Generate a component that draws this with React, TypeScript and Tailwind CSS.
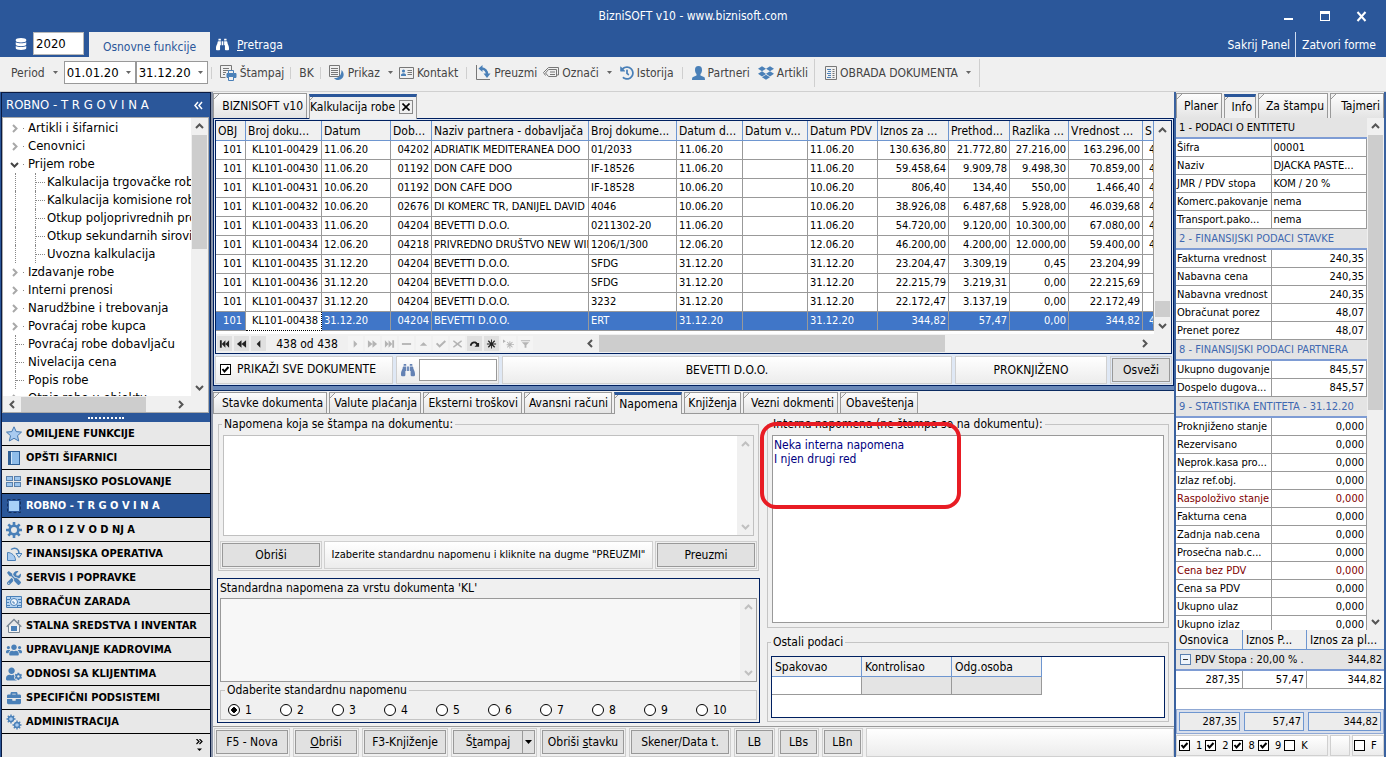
import type { ReactNode } from "react";
import clsx from "clsx";
import {
  FaBinoculars,
  FaBriefcase,
  FaDatabase,
  FaDropbox,
  FaHistory,
  FaTools,
  FaUserCog,
  FaUsers,
} from "react-icons/fa";

const documentColumns = [
  { label: "OBJ", width: "w-[30px]", align: "text-right pr-[3px]" },
  { label: "Broj doku...", width: "w-[76px]", align: "text-right pr-[3px]" },
  { label: "Datum", width: "w-[69px]", align: "text-left pl-[2px]" },
  { label: "Dob...", width: "w-[41px]", align: "text-right pr-[2px]" },
  { label: "Naziv partnera - dobavljača", width: "", align: "text-left pl-[2px]" },
  { label: "Broj dokume...", width: "w-[88px]", align: "text-left pl-[2px]" },
  { label: "Datum d...", width: "w-[66px]", align: "text-left pl-[2px]" },
  { label: "Datum v...", width: "w-[65px]", align: "text-left pl-[2px]" },
  { label: "Datum PDV", width: "w-[70px]", align: "text-left pl-[2px]" },
  { label: "Iznos za ...", width: "w-[71px]", align: "text-right pr-[2px]" },
  { label: "Prethod...", width: "w-[61px]", align: "text-right pr-[2px]" },
  { label: "Razlika ...", width: "w-[59px]", align: "text-right pr-[2px]" },
  { label: "Vrednost ...", width: "w-[74px]", align: "text-right pr-[2px]" },
  { label: "S", width: "w-[11px]", align: "text-left pl-[6px]" },
];

const documents = [
  ["101", "KL101-00429", "11.06.20", "04202", "ADRIATIK MEDITERANEA DOO", "01/2033", "11.06.20", "", "11.06.20", "130.636,80", "21.772,80", "27.216,00", "163.296,00", "4"],
  ["101", "KL101-00430", "11.06.20", "01192", "DON CAFE DOO", "IF-18526", "11.06.20", "", "11.06.20", "59.458,64", "9.909,78", "9.498,30", "70.859,00", "4"],
  ["101", "KL101-00431", "10.06.20", "01192", "DON CAFE DOO", "IF-18528", "10.06.20", "", "10.06.20", "806,40", "134,40", "550,00", "1.466,40", "4"],
  ["101", "KL101-00432", "10.06.20", "02676", "DI KOMERC TR, DANIJEL DAVID", "4046", "10.06.20", "", "10.06.20", "38.926,08", "6.487,68", "5.928,00", "46.039,68", "4"],
  ["101", "KL101-00433", "11.06.20", "04204", "BEVETTI D.O.O.", "0211302-20", "11.06.20", "", "11.06.20", "54.720,00", "9.120,00", "10.300,00", "67.080,00", "4"],
  ["101", "KL101-00434", "12.06.20", "04218", "PRIVREDNO DRUŠTVO NEW WIN", "1206/1/300", "12.06.20", "", "12.06.20", "46.200,00", "4.200,00", "12.000,00", "59.400,00", "4"],
  ["101", "KL101-00435", "31.12.20", "04204", "BEVETTI D.O.O.", "SFDG", "31.12.20", "", "31.12.20", "23.204,47", "3.309,19", "0,45", "23.204,99", ""],
  ["101", "KL101-00436", "31.12.20", "04204", "BEVETTI D.O.O.", "SFDG", "31.12.20", "", "31.12.20", "22.215,79", "3.219,31", "0,00", "22.215,69", ""],
  ["101", "KL101-00437", "31.12.20", "04204", "BEVETTI D.O.O.", "3232", "31.12.20", "", "31.12.20", "22.172,47", "3.137,19", "0,00", "22.172,49", ""],
  ["101", "KL101-00438", "31.12.20", "04204", "BEVETTI D.O.O.", "ERT", "31.12.20", "", "31.12.20", "344,82", "57,47", "0,00", "344,82", "4"],
];

type TreeKind = "closed" | "open" | "leaf" | "child";

const treeItems: { label: string; kind: TreeKind }[] = [
  { label: "Artikli i šifarnici", kind: "closed" },
  { label: "Cenovnici", kind: "closed" },
  { label: "Prijem robe", kind: "open" },
  { label: "Kalkulacija trgovačke robe", kind: "child" },
  { label: "Kalkulacija komisione robe", kind: "child" },
  { label: "Otkup poljoprivrednih proizvoda", kind: "child" },
  { label: "Otkup sekundarnih sirovina", kind: "child" },
  { label: "Uvozna kalkulacija", kind: "child" },
  { label: "Izdavanje robe", kind: "closed" },
  { label: "Interni prenosi", kind: "closed" },
  { label: "Narudžbine i trebovanja", kind: "closed" },
  { label: "Povraćaj robe kupca", kind: "closed" },
  { label: "Povraćaj robe dobavljaču", kind: "leaf" },
  { label: "Nivelacija cena", kind: "leaf" },
  { label: "Popis robe", kind: "leaf" },
  { label: "Otpis robe u objektu", kind: "closed" },
];

const infoSections = [
  {
    title: "1 - PODACI O ENTITETU",
    plain: true,
    rows: [
      ["Šifra", "00001"],
      ["Naziv", "DJACKA PASTE..."],
      ["JMR / PDV stopa", "KOM / 20 %"],
      ["Komerc.pakovanje", "nema"],
      ["Transport.pako...", "nema"],
    ],
  },
  {
    title: "2 - FINANSIJSKI PODACI STAVKE",
    rows: [
      ["Fakturna vrednost", "240,35"],
      ["Nabavna cena", "240,35"],
      ["Nabavna vrednost", "240,35"],
      ["Obračunat porez", "48,07"],
      ["Prenet porez", "48,07"],
    ],
  },
  {
    title: "8 - FINANSIJSKI PODACI PARTNERA",
    rows: [
      ["Ukupno dugovanje", "845,57"],
      ["Dospelo dugova...", "845,57"],
    ],
  },
  {
    title: "9 - STATISTIKA ENTITETA - 31.12.20",
    rows: [
      ["Proknjiženo stanje", "0,000"],
      ["Rezervisano", "0,000"],
      ["Neprok.kasa pro...", "0,000"],
      ["Izlaz ref.obj.", "0,000"],
      ["Raspoloživo stanje", "0,000"],
      ["Fakturna cena", "0,000"],
      ["Zadnja nab.cena", "0,000"],
      ["Prosečna nab.c...", "0,000"],
      ["Cena bez PDV", "0,000"],
      ["Cena sa PDV", "0,000"],
      ["Ukupno ulaz", "0,000"],
      ["Ukupno izlaz", "0,000"],
    ],
  },
];

const highlightedRows = ["Raspoloživo stanje", "Cena bez PDV"];

const BLUE = "#4a80b8";

function StarIcon() {
  return (
    <svg width="16" height="16" viewBox="0 0 16 16">
      <path d="M8 .8l2.200 4.800 5.300.5-4 3.600 1.200 5.300L8 12.300 3.300 15l1.200-5.300-4-3.600 5.300-.5z" fill="#a9cbf0" stroke="#4478b0" strokeLinejoin="round" />
    </svg>
  );
}

function BookIcon() {
  return (
    <svg width="16" height="16" viewBox="0 0 16 16">
      <rect x="2.500" y="1.500" width="11" height="13" fill="#8fbdea" stroke="#2f5f95" />
      <rect x="2" y="1" width="3" height="14" fill="#2f5f95" />
      <path d="M5.500 2v12" stroke="#d4e8fa" />
    </svg>
  );
}

function TilesIcon() {
  return (
    <svg width="16" height="16" viewBox="0 0 16 16" fill="#9cc5ee" stroke="#5a80ab">
      <rect x="0.500" y="2.500" width="6" height="4" />
      <rect x="8.500" y="2.500" width="6" height="4" />
      <rect x="0.500" y="8.500" width="6" height="4" />
      <rect x="8.500" y="8.500" width="6" height="4" />
    </svg>
  );
}

function SelectionIcon() {
  return (
    <svg width="16" height="16" viewBox="0 0 16 16">
      <rect x="1.500" y="1.500" width="13" height="13" fill="none" stroke="#14305c" strokeDasharray="3 2" />
      <rect x="3" y="3" width="10" height="10" fill="#a8d0f8" />
    </svg>
  );
}

function GearIcon() {
  return (
    <svg width="16" height="16" viewBox="0 0 16 16" fill="none" stroke="#4a80b8">
      <circle cx="8" cy="8" r="4.300" strokeWidth="2.600" />
      <path d="M8 0v3M8 13v3M0 8h3M13 8h3M2.300 2.300l2.200 2.200M11.500 11.500l2.200 2.200M13.700 2.300l-2.200 2.200M4.500 11.500l-2.200 2.200" strokeWidth="2.600" />
    </svg>
  );
}

function TwoGearsIcon() {
  return (
    <svg width="16" height="16" viewBox="0 0 16 16" fill="#a9cbf0" stroke="#4a80b8">
      <circle cx="5" cy="5" r="2.500" strokeWidth="1.400" />
      <path d="M5 .5v2M5 7.500v2M.5 5h2M7.500 5h2M1.800 1.800l1.400 1.400M8.200 1.800L6.800 3.200M1.800 8.200l1.400-1.400" strokeWidth="1.400" />
      <circle cx="11" cy="11" r="2.500" strokeWidth="1.400" />
      <path d="M11 6.500v2M11 13.500v2M6.500 11h2M13.500 11h2M7.800 14.200l1.400-1.400M14.200 7.800l-1.400 1.400M14.200 14.200l-1.400-1.400" strokeWidth="1.400" />
    </svg>
  );
}

function TurnoverIcon() {
  return (
    <svg width="16" height="16" viewBox="0 0 16 16">
      <path d="M1.500 14.500v-8c4 0 8 3 8 8z" fill="#a9cbf0" stroke="#4a80b8" />
      <path d="M5 3.500C9 .5 13 3 13 7.500" fill="none" stroke="#4a80b8" strokeWidth="1.500" />
      <path d="M10 7.500h6l-3 4z" fill="#d4e6f8" stroke="#4a80b8" />
    </svg>
  );
}

function BanknotesIcon() {
  return (
    <svg width="16" height="16" viewBox="0 0 16 16">
      <path d="M.5 2.500h15v11H.5z" fill="#b4d3f2" stroke="#4a80b8" />
      <path d="M0 5.500h4M12 5.500h4M0 8.500h3M13 8.500h3M0 11.500h4M12 11.500h4M4.500 3v2M11.500 11v2" stroke="#4a80b8" />
      <circle cx="8" cy="8" r="3.500" fill="#f1f7fd" stroke="#4a80b8" />
      <path d="M6 8h2v2" fill="none" stroke="#4a80b8" />
    </svg>
  );
}

function HouseIcon() {
  return (
    <svg width="16" height="16" viewBox="0 0 16 16">
      <path d="M2.500 7.500v7h11v-7" fill="#f4f4f4" stroke="#7a8794" />
      <path d="M.7 8.700L8 1.500l7.300 7.200M12.500 2v3" fill="none" stroke="#7a8794" strokeWidth="1.400" />
      <rect x="5" y="8" width="6" height="5" fill="#4a80b8" />
    </svg>
  );
}

const modules: { label: string; icon: ReactNode; active?: boolean }[] = [
  { label: "OMILJENE FUNKCIJE", icon: <StarIcon /> },
  { label: "OPŠTI ŠIFARNICI", icon: <BookIcon /> },
  { label: "FINANSIJSKO POSLOVANJE", icon: <TilesIcon /> },
  { label: "ROBNO - T R G O V I N A", icon: <SelectionIcon />, active: true },
  { label: "P R O I Z V O D NJ A", icon: <GearIcon /> },
  { label: "FINANSIJSKA OPERATIVA", icon: <TurnoverIcon /> },
  { label: "SERVIS I POPRAVKE", icon: <FaTools size={14} color={BLUE} /> },
  { label: "OBRAČUN ZARADA", icon: <BanknotesIcon /> },
  { label: "STALNA SREDSTVA I INVENTAR", icon: <HouseIcon /> },
  { label: "UPRAVLJANJE KADROVIMA", icon: <FaUsers size={16} color={BLUE} /> },
  { label: "ODNOSI SA KLIJENTIMA", icon: <FaUserCog size={16} color={BLUE} /> },
  { label: "SPECIFIČNI PODSISTEMI", icon: <FaBriefcase size={14} color={BLUE} /> },
  { label: "ADMINISTRACIJA", icon: <TwoGearsIcon /> },
];

function PersonIcon() {
  return (
    <svg width="13" height="14" viewBox="0 0 13 14" fill="#4a80b8">
      <path d="M6.500 0C9 0 10 1.500 10 4c0 1.500-.5 3-1.500 4v1.500L12 11c.7.400 1 1 1 3H0c0-2 .3-2.600 1-3l3.500-1.500V8C3.500 7 3 5.500 3 4c0-2.500 1-4 3.500-4z" />
    </svg>
  );
}

function PrintIcon() {
  return (
    <svg width="17" height="16" viewBox="0 0 17 16" fill="none">
      <path d="M5.500 12.500h-5v-12h11v5" stroke="#777" />
      <path d="M3 3.500h6M3 5.500h6M3 7.500h3M3 9.500h2" stroke="#777" />
      <path d="M7 8.500h9v4H7z" fill="#4a80b8" stroke="#4a80b8" />
      <path d="M8.500 5.500h5v3h-5zM8.500 11.500h5v4h-5z" fill="#f0f0f0" stroke="#4a80b8" />
    </svg>
  );
}

function ViewIcon() {
  return (
    <svg width="16" height="16" viewBox="0 0 16 16" fill="none">
      <path d="M.5.500h10v11H.5z" stroke="#777" />
      <path d="M2 3.500h7M2 5.500h7M2 7.500h7M2 9.500h7" stroke="#777" />
      <path d="M12.500 5c3.500 3 3 9-3 10-2 .2-3-.5-4.500-2 4 .5 7.500-2 7.500-8z" fill="#4a80b8" />
    </svg>
  );
}

function ContactIcon() {
  return (
    <svg width="15" height="12" viewBox="0 0 15 12" fill="none">
      <path d="M.5.500h14v11H.5z" stroke="#777" />
      <circle cx="4.500" cy="4" r="1.600" fill="#4a80b8" />
      <path d="M2 9V7.500Q4.500 5 7 7.500V9z" fill="#4a80b8" />
      <path d="M8.500 3.500H13M8.500 5.500H13M8.500 7.500H13" stroke="#777" />
    </svg>
  );
}

function TakeIcon() {
  return (
    <svg width="15" height="15" viewBox="0 0 15 15" fill="none">
      <path d="M.5 0v14.500H14" stroke="#777" />
      <path d="M5 3.500c4 0 6 2 6 6" stroke="#4a80b8" strokeWidth="2.400" />
      <path d="M6.500 0v7L2.500 3.500zM7.500 8.500h7L11 13z" fill="#4a80b8" />
    </svg>
  );
}

function TagIcon() {
  return (
    <svg width="16" height="12" viewBox="0 0 16 12" fill="none" stroke="#777">
      <path d="M5.500 2.500h8v7h-8L2.500 6zM7 5h5M7 7.500h5" />
      <path d="M13.500 8h2V.5h-10L.5 5.500l2 3" />
    </svg>
  );
}

function ProcessIcon() {
  return (
    <svg width="12" height="14" viewBox="0 0 12 14" fill="none">
      <path d="M.5.500h11v13H.5z" stroke="#777" />
      <path d="M2 3.500h4M3 5.500h3M2 7.500h4M3 9.500h3M2 11.500h4" stroke="#4a80b8" />
      <path d="M7.500 3.500h2M7.500 5.500h2M7.500 7.500h2M7.500 9.500h2M7.500 11.500h2" stroke="#777" />
    </svg>
  );
}

function Caret({ className = "text-[#666]" }: { className?: string }) {
  return (
    <svg width="5" height="3" viewBox="0 0 5 3" className={clsx("shrink-0", className)}>
      <path d="M0 0h5L2.500 3z" fill="currentColor" />
    </svg>
  );
}

const chevronPaths = {
  up: "M1 6l3.500-3.500L8 6",
  down: "M1 3l3.500 3.500L8 3",
  left: "M6 1L2.500 4.500 6 8",
  right: "M3 1l3.500 3.500L3 8",
};

function Chevron({ dir, className = "text-[#555]" }: { dir: keyof typeof chevronPaths; className?: string }) {
  return (
    <svg width="9" height="9" viewBox="0 0 9 9" className={clsx("shrink-0", className)}>
      <path d={chevronPaths[dir]} fill="none" stroke="currentColor" strokeWidth="2" />
    </svg>
  );
}

function Tab({ label, width, active, closable, height = "h-[25px]" }: { label: string; width: string; active?: boolean; closable?: boolean; height?: string }) {
  return (
    <button
      role="tab"
      aria-selected={!!active}
      className={clsx(
        "relative flex shrink-0 items-center justify-end gap-1 overflow-hidden border border-b-0 border-[#999] pr-[3px] whitespace-nowrap",
        width,
        height,
        active ? "z-10 -mb-px border-t-[3px] border-t-[#2b579a] bg-[#f0f0f0] pb-[2px]" : "bg-linear-to-b from-[#fdfdfd] to-[#e4e4e4]"
      )}
    >
      <svg width="7" height="7" viewBox="0 0 7 7" className={clsx("absolute -left-px", active ? "-top-[3px]" : "-top-px")}>
        <path d="M0 0h7L0 7z" fill="#f0f0f0" />
        <path d="M7 0L0 7" stroke="#999" />
      </svg>
      {label}
      {closable && (
        <span className="flex size-[14px] items-center justify-center border border-[#888]">
          <svg width="8" height="8" viewBox="0 0 8 8">
            <path d="M.5.500l7 7M7.500.500l-7 7" stroke="#000" strokeWidth="1.600" />
          </svg>
        </span>
      )}
    </button>
  );
}

function MutedScrollBar() {
  return (
    <div className="flex w-[16px] shrink-0 flex-col items-center justify-between bg-[#f0f0f0] py-1">
      <Chevron dir="up" className="text-[#c0c0c0]" />
      <Chevron dir="down" className="text-[#c0c0c0]" />
    </div>
  );
}

function Check({ label, checked }: { label: string; checked?: boolean }) {
  return (
    <label className="flex items-center gap-1.5">
      <span className="grid">
        <input type="checkbox" defaultChecked={checked} className="peer col-start-1 row-start-1 size-[11px] appearance-none border border-black bg-white" />
        <svg width="11" height="11" viewBox="0 0 11 11" className="pointer-events-none invisible col-start-1 row-start-1 peer-checked:visible">
          <path d="M2.500 5l2 2.500L8.500 3" fill="none" stroke="#000" strokeWidth="2" />
        </svg>
      </span>
      {label}
    </label>
  );
}

function PanelButton({ children, className }: { children: ReactNode; className?: string }) {
  return (
    <div className="flex border border-[#cfcfcf] p-px">
      <button className={clsx("flex h-[24px] items-center justify-center border border-[#999] bg-[#e1e1e1] whitespace-nowrap", className)}>{children}</button>
    </div>
  );
}

function TitleBar() {
  return (
    <header className="bg-[#2b579a] text-white">
      <div className="grid h-[32px] grid-cols-[1fr_auto_1fr] items-center">
        <h1 className="col-start-2">BizniSOFT v10 - www.biznisoft.com</h1>
        <div className="flex items-center justify-end gap-6 pr-[18px]">
          <button aria-label="Umanji" className="flex size-3 items-end pb-[2px]">
            <span className="h-[2px] w-[9px] bg-white" />
          </button>
          <button aria-label="Uvećaj" className="size-3">
            <span className="block h-[10px] w-[10px] border border-t-[3px] border-white" />
          </button>
          <button aria-label="Zatvori" className="size-3">
            <svg width="11" height="11" viewBox="0 0 11 11">
              <path d="M1.500 1l8 9M9.500 1l-8 9" stroke="#fff" strokeWidth="2" />
            </svg>
          </button>
        </div>
      </div>
      <div className="flex h-[25px] items-end">
        <FaDatabase className="mr-[6px] mb-[7px] ml-[15px]" size={12} />
        <select aria-label="Godina" defaultValue="2020" className="mb-[2px] h-[23px] w-[51px] appearance-none border border-[#b8b8b8] bg-white pl-[2px] text-[13px] text-black">
          <option>2020</option>
        </select>
        <button className="ml-[5px] h-[25px] w-[121px] bg-[#f0f0f0] pt-1 text-[#2b579a]">Osnovne funkcije</button>
        <a href="#pretraga" className="flex h-[25px] items-center gap-2 pl-[6px]">
          <FaBinoculars size={13} />
          <span>
            <u>P</u>retraga
          </span>
        </a>
        <div className="ml-auto flex h-[25px] items-center">
          <button className="h-full border-r border-[#cfdcf0] pr-[5px]">Sakrij Panel</button>
          <button className="h-full pr-[10px] pl-[6px]">Zatvori forme</button>
        </div>
      </div>
    </header>
  );
}

function DateBox({ label, value }: { label: string; value: string }) {
  return (
    <span className="flex h-[23px] w-[72px] shrink-0 items-center justify-between border border-[#999] bg-white pr-1">
      <input aria-label={label} defaultValue={value} className="w-[56px] pl-[2px] text-[13px] text-black outline-none" />
      <Caret />
    </span>
  );
}

function Divider({ className }: { className?: string }) {
  return <span className={clsx("w-px shrink-0 bg-[#cfcfcf]", className)} />;
}

function Tool({ icon, label, caret, className }: { icon?: ReactNode; label: string; caret?: boolean; className?: string }) {
  return (
    <button className={clsx("flex shrink-0 items-center gap-[3px] whitespace-nowrap", className)}>
      {icon}
      {label}
      {caret && <Caret className="ml-[5px] text-[#666]" />}
    </button>
  );
}

function Toolbar() {
  return (
    <div className="flex h-[35px] items-center border-b border-[#d0d0d0] pb-[3px] pl-[11px] text-[#444]">
      <Tool label="Period" caret className="mr-[6px]" />
      <div className="flex">
        <DateBox label="Od datuma" value="01.01.20" />
        <DateBox label="Do datuma" value="31.12.20" />
      </div>
      <Divider className="mr-2 ml-[3px] h-3" />
      <Tool icon={<PrintIcon />} label="Štampaj" />
      <Divider className="mr-2 ml-[6px] h-3" />
      <Tool label="BK" />
      <Divider className="mr-2 ml-[6px] h-3" />
      <Tool icon={<ViewIcon />} label="Prikaz" caret className="mr-[6px]" />
      <Tool icon={<ContactIcon />} label="Kontakt" />
      <Divider className="mr-[9px] ml-2 h-3" />
      <Tool icon={<TakeIcon />} label="Preuzmi" className="mr-[6px]" />
      <Tool icon={<TagIcon />} label="Označi" caret className="mr-2" />
      <Tool icon={<FaHistory size={14} color={BLUE} />} label="Istorija" />
      <Divider className="mr-[9px] ml-2 h-3" />
      <Tool icon={<PersonIcon />} label="Partneri" className="mr-2" />
      <Tool icon={<FaDropbox size={16} color={BLUE} />} label="Artikli" />
      <Divider className="mr-[10px] ml-[6px] h-7" />
      <Tool icon={<ProcessIcon />} label="OBRADA DOKUMENTA" caret />
      <Divider className="ml-2 h-7" />
    </div>
  );
}

function TreeRow({ label, kind }: { label: string; kind: TreeKind }) {
  return (
    <li className="flex h-[18px] items-center whitespace-nowrap">
      <span className="flex h-full w-[25px] shrink-0 items-center pl-[7px]">
        {(kind === "closed" || kind === "open") && (
          <>
            <Chevron dir={kind === "open" ? "down" : "right"} className={kind === "open" ? "text-[#444]" : "text-[#a8a8a8]"} />
            <span className="ml-[4px] w-px border-t border-dotted border-[#888]" />
          </>
        )}
        {kind === "leaf" && (
          <span className="ml-[5px] flex h-full w-[9px] items-center border-l border-dotted border-[#888]">
            <span className="w-full border-t border-dotted border-[#888]" />
          </span>
        )}
        {kind === "child" && <span className="ml-[5px] h-full border-l border-dotted border-[#888]" />}
      </span>
      {kind === "child" && (
        <span className="ml-[7px] flex h-full w-[12px] shrink-0 items-center border-l border-dotted border-[#888] pr-[2px]">
          <span className="w-full border-t border-dotted border-[#888]" />
        </span>
      )}
      <a href="#stavka">{label}</a>
    </li>
  );
}

function Sidebar() {
  return (
    <aside className="flex w-[210px] shrink-0 flex-col border-x border-t border-[#0a1a40] bg-[#2b579a]">
      <div className="flex h-[24px] shrink-0 items-center justify-between px-[4px] text-[13px] text-white">
        <span>ROBNO - T R G O V I N A</span>
        <svg width="9" height="9" viewBox="0 0 9 9" fill="none" stroke="#fff" strokeWidth="1.500" className="mr-[3px]">
          <path d="M4 1L1 4.500 4 8M8 1L5 4.500 8 8" />
        </svg>
      </div>
      <div className="mr-px flex min-h-0 flex-1 flex-col border border-[#aaa] bg-white">
        <div className="flex min-h-0 flex-1">
          <ul className="min-w-0 flex-1 overflow-hidden pt-px text-[13px]">
            {treeItems.map((item) => (
              <TreeRow key={item.label} {...item} />
            ))}
          </ul>
          <div className="flex w-[17px] shrink-0 flex-col items-center justify-between bg-[#f0f0f0] py-1">
            <Chevron dir="up" />
            <div className="mt-1 mb-auto h-[114px] w-[15px] bg-[#cdcdcd]" />
            <Chevron dir="down" />
          </div>
        </div>
        <div className="flex h-[16px] shrink-0 items-center bg-[#f0f0f0] pr-[23px] pl-[5px]">
          <Chevron dir="left" />
          <div className="mr-auto ml-1 h-[15px] w-[125px] bg-[#cdcdcd]" />
          <Chevron dir="right" />
        </div>
      </div>
      <div className="flex h-[9px] shrink-0 items-center justify-center">
        <span className="w-9 border-t-2 border-dotted border-white" />
      </div>
      <nav className="shrink-0 bg-[#e8e8e8]">
        {modules.map((m) => (
          <a
            key={m.label}
            href="#modul"
            className={clsx(
              "flex h-[24px] items-center border-b border-black text-[11px] font-bold whitespace-nowrap",
              m.active && "bg-[#2b579a] text-white"
            )}
          >
            <span className="flex w-[24px] shrink-0 justify-center">{m.icon}</span>
            {m.label}
          </a>
        ))}
        <div className="flex h-[23px] justify-end pt-[5px] pr-[7px]">
          <svg width="7" height="14" viewBox="0 0 7 14">
            <path d="M.5 0l2.500 2.500L.5 5M3.500 0L6 2.500 3.500 5" fill="none" stroke="#000" strokeWidth="1.200" />
            <path d="M1 9.500h5L3.500 12z" />
          </svg>
        </div>
      </nav>
    </aside>
  );
}

const navigatorButtons: { label: string; path: string; enabled?: boolean }[] = [
  { label: "Prvi", path: "M1 0h2v8H1zM7 0v8L3 4zM11 0v8L7 4z", enabled: true },
  { label: "Strana nazad", path: "M6 0v8L1 4zM11 0v8L6 4z", enabled: true },
  { label: "Prethodni", path: "M8 0v8L4 4z", enabled: true },
  { label: "Sledeći", path: "M4 0v8l4-4z" },
  { label: "Strana napred", path: "M1 0v8l5-4zM6 0v8l5-4z" },
  { label: "Poslednji", path: "M1 0v8l4-4zM5 0v8l4-4zM9 0h2v8H9z" },
  { label: "Izbaci", path: "M1 3h10v2H1z" },
  { label: "Izmeni", path: "M2 6h8L6 2z" },
  { label: "Potvrdi", path: "M1 4l1.500-1.500L5 5l5.500-5L12 1.500 5 8z" },
  { label: "Odustani", path: "M2 0l4 3 4-3 1 1-3.500 3L11 7l-1 1-4-3-4 3-1-1 3.500-3L1 1z" },
  { label: "Osveži prikaz", path: "M1 6C1 1 8 0 9 3h2v4H6l2-2C7 2 3 3 3 6z", enabled: true },
  { label: "Obeleži", path: "M5.500-1h1v3.500L9 0l1 1-2.500 2.500H11v1H7.500L10 7 9 8 6.500 5.500V9h-1V5.500L3 8 2 7l2.500-2.500H1v-1h3.500L2 1l1-1 2.500 2.500z", enabled: true },
  { label: "Idi na obeleženi", path: "M0-1l3 2-3 2zM7 1h1v2.500l2-2 .7.700-2 2H12v1H8.700l2 2-.7.700-2-2V9H7V6L5 8l-.7-.7 2-2H4v-1h2.300l-2-2 .7-.7 2 2z" },
  { label: "Filter", path: "M1 0h10v1H1zM2 2h8L7 5v3H5V5z" },
];

function NavigatorButton({ label, path, enabled }: { label: string; path: string; enabled?: boolean }) {
  return (
    <button aria-label={label} disabled={!enabled} className={clsx("flex size-[15px] items-center justify-center", enabled ? "bg-[#e0e0e0]" : "bg-[#f4f4f4]")}>
      <svg width="11" height="8" viewBox="0 0 12 8" className="overflow-visible">
        <path d={path} fill={enabled ? "#222" : "#b4b4b4"} />
      </svg>
    </button>
  );
}

function DocumentGrid() {
  return (
    <div className="flex flex-col border border-[#002060] bg-[#dfe8f5] p-px">
      <div className="border border-[#002060] bg-white">
        <div className="flex">
          <div className="min-w-0 flex-1">
            <table className="w-full table-fixed border-separate border-spacing-0 text-[11px]">
              <thead>
                <tr className="h-[20px] bg-[#f0f0f0] text-[12px]">
                  {documentColumns.map((c) => (
                    <th key={c.label} className={clsx("overflow-hidden border-r border-b border-[#6e96d0] px-[2px] text-left font-normal whitespace-nowrap", c.width)}>
                      {c.label}
                    </th>
                  ))}
                </tr>
              </thead>
              <tbody>
                {documents.map((row, i) => {
                  const selected = i === documents.length - 1;
                  return (
                    <tr key={row[1]} className={clsx("h-[19px]", selected && "bg-[#4076c8] text-white")}>
                      {row.map((cell, j) => (
                        <td
                          key={j}
                          className={clsx(
                            "overflow-hidden border-r border-b leading-[18px] whitespace-nowrap",
                            documentColumns[j].align,
                            selected && j === 1 ? "border-dotted border-black bg-white text-black" : "border-[#999]"
                          )}
                        >
                          {cell}
                        </td>
                      ))}
                    </tr>
                  );
                })}
              </tbody>
            </table>
            <div className="h-[3px]" />
          </div>
          <div className="flex w-[17px] flex-col items-center bg-[#f0f0f0] pt-[5px] pb-1">
            <Chevron dir="up" />
            <div className="mt-auto mb-[4px] h-[16px] w-[15px] bg-[#cdcdcd]" />
            <Chevron dir="down" />
          </div>
        </div>
        <div className="flex h-[19px] items-center bg-[#f0f0f0]">
          <div className="flex items-center gap-[2px] pl-px">
            {navigatorButtons.slice(0, 3).map((b) => (
              <NavigatorButton key={b.label} {...b} />
            ))}
            <span className="w-[78px] text-center text-[12px]">438 od 438</span>
            {navigatorButtons.slice(3).map((b) => (
              <NavigatorButton key={b.label} {...b} />
            ))}
          </div>
          <div className="ml-[53px] flex h-full flex-1 items-center pr-[22px]">
            <Chevron dir="left" />
            <div className="mr-auto ml-1 h-[17px] w-8/13 bg-[#cdcdcd]" />
            <Chevron dir="right" />
          </div>
        </div>
      </div>
      <div className="mt-[2px] flex h-[28px] gap-[3px]">
        <div className="flex w-[178px] items-center border border-[#d0d0d0] bg-linear-to-b from-white to-[#ececec] pb-[2px] pl-1">
          <Check label="PRIKAŽI SVE DOKUMENTE" checked />
        </div>
        <div className="flex w-[103px] items-center gap-1 border border-[#d0d0d0] bg-linear-to-b from-white to-[#ececec] pl-1">
          <FaBinoculars size={14} color="#6482b4" />
          <input aria-label="Pronađi" className="h-[22px] w-[78px] border border-[#999] bg-white px-1" />
        </div>
        <div className="flex flex-1 items-center justify-center border border-[#d0d0d0] bg-linear-to-b from-white to-[#ececec]">BEVETTI D.O.O.</div>
        <div className="flex w-[152px] items-center justify-center border border-[#d0d0d0] bg-linear-to-b from-white to-[#ececec]">PROKNJIŽENO</div>
        <PanelButton className="w-[58px]">Osveži</PanelButton>
      </div>
    </div>
  );
}

const legend = "ml-[3px] px-[2px] leading-[14px]";
const group = "min-w-0 border border-[#c4c4c4]";

function NotesPane() {
  return (
    <div className="flex min-h-0 flex-1 gap-[7px] border-t border-[#999] pt-[3px] pr-[5px] pb-[3px] pl-1">
      <div className="flex min-w-0 flex-[543] flex-col">
        <fieldset className={clsx(group, "mx-px")}>
          <legend className={legend}>Napomena koja se štampa na dokumentu:</legend>
          <div className="mx-1 mt-1 flex h-[101px] border border-[#c0c0c0] bg-white">
            <textarea aria-label="Napomena koja se štampa na dokumentu" className="min-w-0 flex-1 resize-none outline-none" />
            <MutedScrollBar />
          </div>
          <div className="mt-[5px] flex gap-[2px] px-px pb-px">
            <PanelButton className="w-[98px]">Obriši</PanelButton>
            <div className="flex flex-1 items-center justify-center border border-[#d0d0d0] bg-linear-to-b from-white to-[#ececec] text-[11px]">
              Izaberite standardnu napomenu i kliknite na dugme "PREUZMI"
            </div>
            <PanelButton className="w-[98px]">Preuzmi</PanelButton>
          </div>
        </fieldset>
        <div className="mt-[7px] flex min-h-0 flex-1 flex-col border border-[#002060] px-[2px] pb-[2px]">
          <label htmlFor="standardna" className="py-px leading-[17px]">Standardna napomena za vrstu dokumenta 'KL'</label>
          <div className="flex min-h-0 flex-1 border border-[#999] bg-[#f7f7f7]">
            <textarea id="standardna" className="min-w-0 flex-1 resize-none outline-none" />
            <MutedScrollBar />
          </div>
          <fieldset className={clsx(group, "mt-px")}>
            <legend className="ml-1 px-[2px] leading-[14px]">Odaberite standardnu napomenu</legend>
            <div className="flex h-[22px] items-center pt-[3px] pl-[7px]">
              {[1, 2, 3, 4, 5, 6, 7, 8, 9, 10].map((n) => (
                <label key={n} className="flex w-[52px] items-center gap-[5px]">
                  <input
                    type="radio"
                    name="napomena"
                    defaultChecked={n === 1}
                    className="size-[12px] appearance-none rounded-full border border-black bg-white checked:bg-radial checked:from-black checked:from-35% checked:to-white checked:to-40%"
                  />
                  {n}
                </label>
              ))}
            </div>
          </fieldset>
        </div>
      </div>
      <div className="flex min-w-0 flex-[402] flex-col">
        <div className="relative flex min-h-0 flex-1 flex-col">
          <fieldset className={clsx(group, "flex flex-1 flex-col")}>
            <legend className={legend}>Interna napomena (ne štampa se na dokumentu):</legend>
            <div className="flex h-full flex-col px-1 pt-1 pb-1">
              <textarea
                aria-label="Interna napomena"
                defaultValue={"Neka interna napomena\nI njen drugi red"}
                className="w-full flex-1 resize-none border border-[#999] bg-white px-px py-[2px] leading-[14px] text-[#000080] outline-none"
              />
            </div>
          </fieldset>
          <div className="pointer-events-none absolute top-[5px] -left-[7px] h-[87px] w-[201px] rounded-2xl border-4 border-[#e81c24]" />
        </div>
        <fieldset className={clsx(group, "mt-[7px] mb-px")}>
          <legend className={legend}>Ostali podaci</legend>
          <div className="m-[3px] mt-[7px] h-[62px] border border-[#002060] bg-white">
            <table className="table-fixed border-separate border-spacing-0">
              <thead>
                <tr className="h-[20px] bg-[#f0f0f0]">
                  {["Spakovao", "Kontrolisao", "Odg.osoba"].map((h) => (
                    <th key={h} className="w-[90px] border-r border-b border-[#6e96d0] px-[3px] text-left font-normal">{h}</th>
                  ))}
                </tr>
              </thead>
              <tbody>
                <tr className="h-[18px]">
                  <td className="border-r border-b border-[#999]" />
                  <td className="border-r border-b border-[#999] bg-[#e4e4e4]" />
                  <td className="border-r border-b border-[#999] bg-[#e4e4e4]" />
                </tr>
              </tbody>
            </table>
          </div>
        </fieldset>
      </div>
    </div>
  );
}

function ActionBar() {
  return (
    <div className="flex h-[31px] shrink-0 gap-[3px] border-t border-[#999] pt-px pl-px">
      <PanelButton className="w-[72px]">F5 - Nova</PanelButton>
      <PanelButton className="w-[62px]"><span><u>O</u>briši</span></PanelButton>
      <PanelButton className="w-[82px]">F3-Knjiženje</PanelButton>
      <div className="flex border border-[#cfcfcf] p-px">
        <button className="h-[24px] w-[70px] border border-[#999] bg-[#e1e1e1]">Š<u>t</u>ampaj</button>
        <button aria-label="Opcije štampe" className="flex h-[24px] w-[12px] items-center justify-center border border-l-0 border-[#999] bg-[#e1e1e1]">
          <svg width="7" height="4" viewBox="0 0 7 4" className="shrink-0">
            <path d="M0 0h7L3.500 4z" />
          </svg>
        </button>
      </div>
      <PanelButton className="w-[82px]"><span>Obriši <u>s</u>tavku</span></PanelButton>
      <PanelButton className="w-[98px]">Skener/Data t.</PanelButton>
      <PanelButton className="w-[37px]">LB</PanelButton>
      <PanelButton className="w-[37px]">LBs</PanelButton>
      <PanelButton className="w-[37px]">LBn</PanelButton>
      <div className="flex-1 border border-[#d0d0d0] bg-linear-to-b from-white to-[#ececec]" />
    </div>
  );
}

function Workspace() {
  return (
    <main className="flex min-w-0 flex-1 flex-col border-l-2 border-[#8a94a8]">
      <div role="tablist" className="flex h-[26px] shrink-0 items-end gap-[2px]">
        <Tab label="BIZNISOFT v10" width="w-[94px]" />
        <Tab label="Kalkulacija robe" width="w-[108px]" active closable />
      </div>
      <DocumentGrid />
      <div className="h-[5px] shrink-0 border-b border-[#0a2a60] bg-[#6a88b8]" />
      <div role="tablist" className="flex h-[22px] shrink-0 items-end gap-[2px]">
        <Tab label="Stavke dokumenta" width="w-[114px]" height="h-[21px]" />
        <Tab label="Valute plaćanja" width="w-[92px]" height="h-[21px]" />
        <Tab label="Eksterni troškovi" width="w-[99px]" height="h-[21px]" />
        <Tab label="Avansni računi" width="w-[88px]" height="h-[21px]" />
        <Tab label="Napomena" width="w-[68px]" height="h-[22px]" active />
        <Tab label="Knjiženja" width="w-[57px]" height="h-[21px]" />
        <Tab label="Vezni dokmenti" width="w-[95px]" height="h-[21px]" />
        <Tab label="Obaveštenja" width="w-[78px]" height="h-[21px]" />
      </div>
      <NotesPane />
      <ActionBar />
    </main>
  );
}

function InfoPanel() {
  return (
    <aside className="flex w-[212px] shrink-0 flex-col border-x-2 border-[#3a62a0] bg-[#f0f0f0]">
      <div role="tablist" className="flex h-[26px] shrink-0 items-end gap-[2px] overflow-hidden">
        <Tab label="Planer" width="w-[46px]" />
        <Tab label="Info" width="w-[32px]" active />
        <Tab label="Za štampu" width="w-[70px]" />
        <Tab label="Tajmeri" width="w-[54px]" />
      </div>
      <div className="flex min-h-0 flex-1 text-[11px]">
        <div className="min-w-0 flex-1 overflow-hidden bg-white">
          <table className="w-full table-fixed border-separate border-spacing-0">
            {infoSections.map((s) => (
              <tbody key={s.title}>
                <tr className="h-[21px]">
                  <th colSpan={2} className={clsx("border-b-2 border-[#7e9cd4] bg-[#e4e4e4] px-[3px] text-left font-normal whitespace-nowrap", s.plain ? "text-black" : "text-[#3f68b0]")}>
                    {s.title}
                  </th>
                </tr>
                {s.rows.map(([name, value]) => (
                  <tr key={name} className={clsx("h-[18px]", highlightedRows.includes(name) && "text-[#800000]")}>
                    <td className="overflow-hidden border-r border-b border-[#999] pl-px leading-[17px] whitespace-nowrap">{name}</td>
                    <td className={clsx("overflow-hidden border-r border-b border-[#999] px-[2px] leading-[17px] whitespace-nowrap", !s.plain && "text-right")}>{value}</td>
                  </tr>
                ))}
              </tbody>
            ))}
          </table>
        </div>
        <div className="flex w-[17px] flex-col items-center bg-[#f0f0f0] py-1">
          <Chevron dir="up" />
          <div className="mt-1 h-[275px] w-[15px] bg-[#cdcdcd]" />
          <Chevron dir="down" className="mt-auto text-[#555]" />
        </div>
      </div>
      <div className="shrink-0 bg-white text-[11px]">
        <table className="w-full table-fixed border-separate border-spacing-0">
          <thead>
            <tr className="h-[20px] bg-[#f0f0f0] text-[12px]">
              <th className="w-[67px] border-r border-b border-[#6e96d0] px-[3px] text-left font-normal">Osnovica</th>
              <th className="w-[64px] border-r border-b border-[#6e96d0] px-[3px] text-left font-normal whitespace-nowrap">Iznos P...</th>
              <th className="border-b border-[#6e96d0] px-[3px] text-left font-normal whitespace-nowrap">Iznos za pl...</th>
            </tr>
          </thead>
          <tbody>
            <tr className="h-[21px] bg-[#e4e4e4]">
              <td colSpan={2} className="border-b-2 border-[#7e9cd4]">
                <span className="flex items-center gap-1 pl-1">
                  <button aria-label="Skupi grupu" className="flex size-[11px] items-center justify-center border border-[#5a80b0] bg-[#eef4fb]">
                    <span className="h-px w-[5px] bg-[#333]" />
                  </button>
                  PDV Stopa : 20,00 % .
                </span>
              </td>
              <td className="border-b-2 border-[#7e9cd4] pr-[2px] text-right">344,82</td>
            </tr>
            <tr className="h-[18px] text-right">
              <td className="border-r border-b border-[#999] pr-[2px]">287,35</td>
              <td className="border-r border-b border-[#999] pr-[2px]">57,47</td>
              <td className="border-b border-[#999] pr-[2px]">344,82</td>
            </tr>
          </tbody>
        </table>
        <div className="h-[20px]" />
        <div className="flex h-[25px] gap-1 border border-[#8fa8d4] bg-[#d8dfec] p-[2px] text-right">
          <output className="w-[61px] border border-[#6e96d0] bg-[#ececec] pr-[2px] leading-[17px]">287,35</output>
          <output className="w-[60px] border border-[#6e96d0] bg-[#ececec] pr-[2px] leading-[17px]">57,47</output>
          <output className="flex-1 border border-[#6e96d0] bg-[#ececec] pr-[2px] leading-[17px]">344,82</output>
        </div>
      </div>
      <div className="flex h-[23px] shrink-0 gap-[2px] pt-px pb-px text-[11px]">
        <div className="flex flex-1 items-center gap-[3px] border border-[#d0d0d0] bg-linear-to-b from-white to-[#ececec] pl-[2px]">
          <Check label="1" checked />
          <Check label="2" checked />
          <Check label="8" checked />
          <Check label="9" checked />
          <Check label="K" />
        </div>
        <div className="w-[20px] border border-[#d0d0d0] bg-linear-to-b from-white to-[#ececec]" />
        <div className="flex w-[32px] items-center border border-[#d0d0d0] bg-linear-to-b from-white to-[#ececec] pl-px">
          <Check label="F" />
        </div>
      </div>
    </aside>
  );
}

export default function App() {
  return (
    <div className="flex h-screen min-h-[700px] flex-col overflow-hidden bg-[#f0f0f0] font-['DejaVu_Sans_Condensed','Noto_Sans',sans-serif] text-[12px] leading-4 text-black">
      <TitleBar />
      <Toolbar />
      <div className="flex min-h-0 flex-1 border-l border-[#2b579a]">
        <Sidebar />
        <Workspace />
        <InfoPanel />
      </div>
    </div>
  );
}
